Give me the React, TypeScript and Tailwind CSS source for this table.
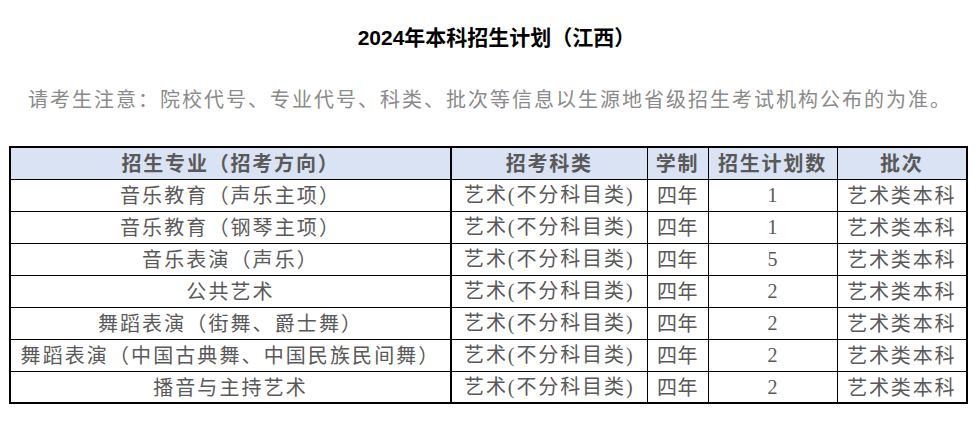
const rows = [
  { major: "音乐教育（声乐主项）", count: 1 },
  { major: "音乐教育（钢琴主项）", count: 1 },
  { major: "音乐表演（声乐）", count: 5 },
  { major: "公共艺术", count: 2 },
  { major: "舞蹈表演（街舞、爵士舞）", count: 2 },
  { major: "舞蹈表演（中国古典舞、中国民族民间舞）", count: 2 },
  { major: "播音与主持艺术", count: 2 },
];

const headers = ["招生专业（招考方向）", "招考科类", "学制", "招生计划数", "批次"];

export default function App() {
  return (
    <div className="w-[977px] h-[421px] bg-white pt-[25px] font-['Noto_Sans_CJK_SC',sans-serif]">
      <h1 className="text-center text-[21px] leading-[26px] font-bold text-black font-['Liberation_Sans','Noto_Sans_CJK_SC',sans-serif] pl-[16px] tracking-[0px]">
        2024年本科招生计划（江西）
      </h1>
      <p className="mt-[33px] pl-[28px] text-[20px] leading-[30px] tracking-[2px] text-[#8a8a8a]">
        请考生注意：院校代号、专业代号、科类、批次等信息以生源地省级招生考试机构公布的为准。
      </p>

      <table className="mt-[32px] ml-[9px] w-[957px] table-fixed border-collapse border-2 border-black">
        <colgroup>
          <col className="w-[441px]" />
          <col className="w-[196px]" />
          <col className="w-[61px]" />
          <col className="w-[129px]" />
          <col className="w-[130px]" />
        </colgroup>
        <thead>
          <tr className="h-[32px] bg-[#dae3f3]">
            {headers.map((h, i) => (
              <th
                key={h}
                className={
                  "p-0 text-center text-[20px] leading-[28px] font-bold tracking-[1.8px] text-[#595959] border border-black" +
                  (i === 0 ? " border-r-2" : "")
                }
              >
                {h}
              </th>
            ))}
          </tr>
        </thead>
        <tbody>
          {rows.map((r) => (
            <tr key={r.major} className="h-[32px]">
              <td className="p-0 text-center text-[20px] leading-[28px] tracking-[2.1px] text-[#595959] border border-black border-r-2 whitespace-nowrap">
                {r.major}
              </td>
              <td className="p-0 text-center text-[20px] leading-[28px] tracking-[1.9px] text-[#595959] border border-black font-['Liberation_Serif','Noto_Sans_CJK_SC',serif] whitespace-nowrap">
                艺术(不分科目类)
              </td>
              <td className="p-0 text-center text-[20px] leading-[28px] tracking-[0.5px] text-[#595959] border border-black">
                四年
              </td>
              <td className="p-0 text-center text-[20px] leading-[28px] text-[#595959] border border-black font-['Liberation_Serif',serif]">
                {r.count}
              </td>
              <td className="p-0 text-center text-[20px] leading-[28px] tracking-[1.8px] text-[#595959] border border-black">
                艺术类本科
              </td>
            </tr>
          ))}
        </tbody>
      </table>
    </div>
  );
}
